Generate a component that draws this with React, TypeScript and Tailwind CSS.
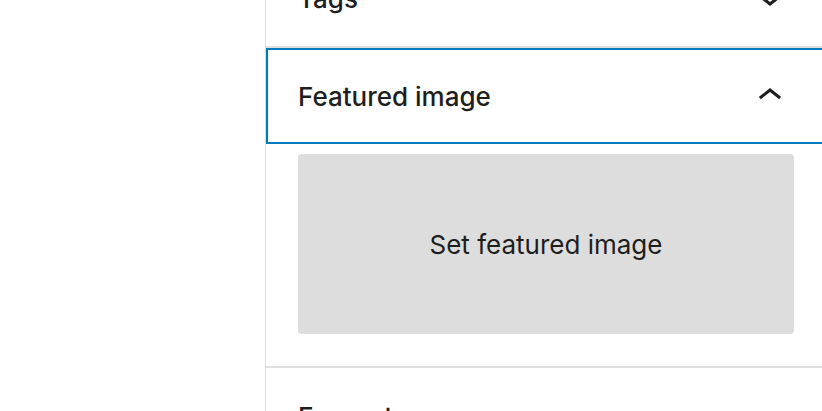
const font = { fontFamily: "Inter, 'Noto Sans', sans-serif" };

function Chevron({ up }: { up?: boolean }) {
  return (
    <svg viewBox="0 0 24 24" className="h-12 w-12 fill-[#1e1e1e]">
      {up ? (
        <path d="M6.5 12.4L12 8l5.5 4.4-.9 1.2L12 10l-4.6 3.6-1-1.2z" />
      ) : (
        <path d="M17.5 11.6L12 16l-5.5-4.4.9-1.2L12 14l4.6-3.6 1 1.2z" />
      )}
    </svg>
  );
}

function PanelHeader({ title, open, focused }: { title: string; open?: boolean; focused?: boolean }) {
  return (
    <div
      className={
        "flex h-24 shrink-0 items-center justify-between pl-8 pr-8 " +
        (focused ? "shadow-[inset_0_0_0_2px_#007cba]" : "")
      }
    >
      <span className="text-[26px] font-medium text-[#1e1e1e]">{title}</span>
      <Chevron up={open} />
    </div>
  );
}

export default function App() {
  return (
    <div className="flex h-[411px] w-[822px] items-start overflow-hidden bg-white" style={font}>
      <div className="w-[265px] shrink-0" />
      <div className="-mt-[50px] flex w-[561px] shrink-0 flex-col border-l border-[#dddddd]">
        <div className="border-b-2 border-[#e0e0e0]">
          <PanelHeader title="Tags" />
        </div>

        <div className="border-b-2 border-[#e0e0e0]">
          <PanelHeader title="Featured image" open focused />
          <div className="px-8 pb-8 pt-2.5">
            <button
              type="button"
              className="flex h-[180px] w-[496px] items-center justify-center rounded bg-[#dddddd] text-[26px] text-[#1e1e1e]"
            >
              Set featured image
            </button>
          </div>
        </div>

        <PanelHeader title="Excerpt" />
      </div>
    </div>
  );
}
